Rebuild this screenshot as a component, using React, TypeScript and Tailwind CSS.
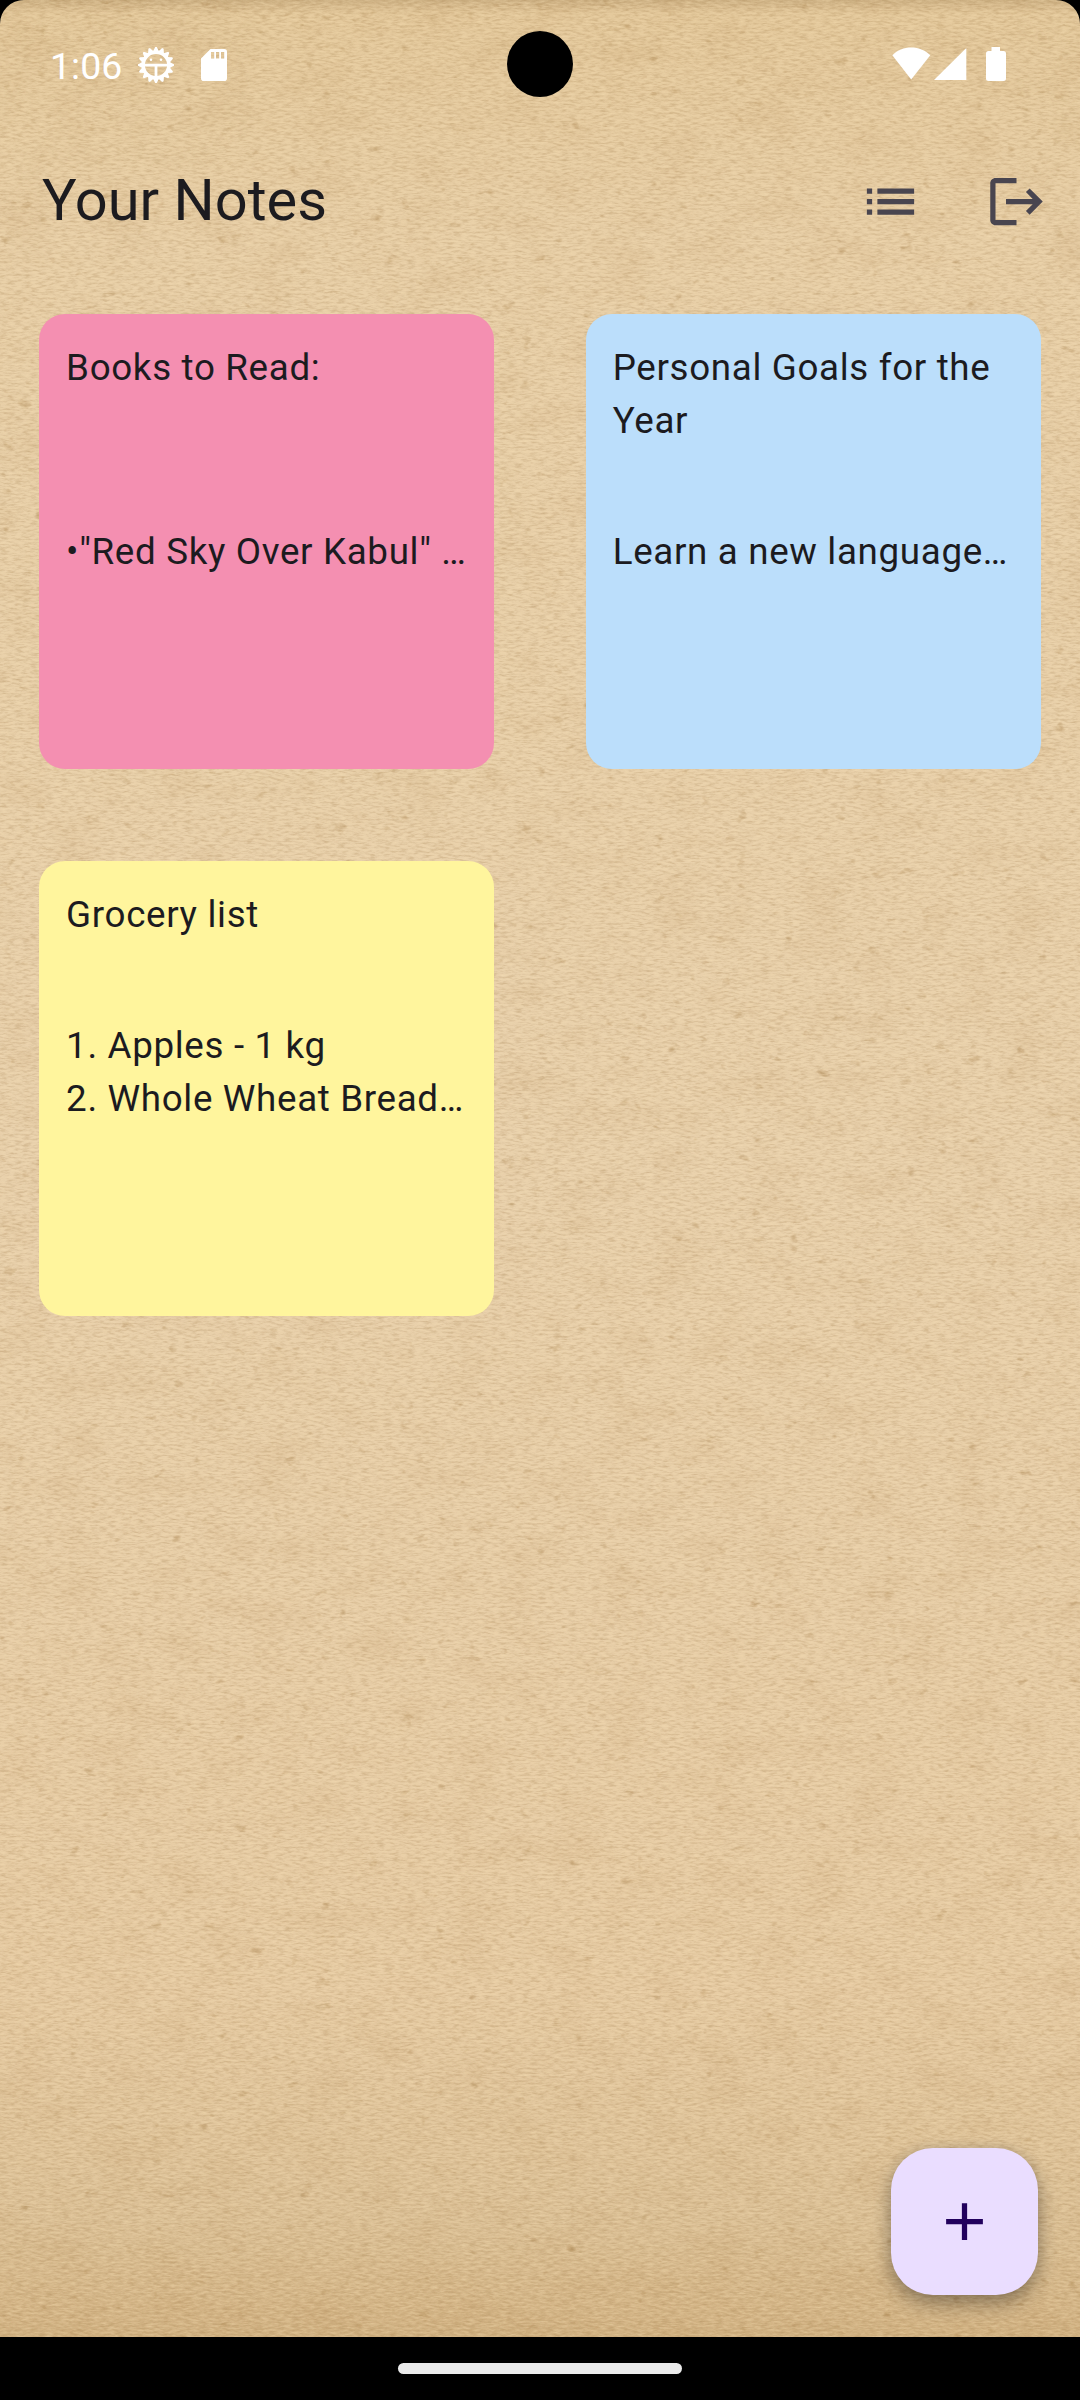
import React from "react";

const Paper = () => (
  <svg className="absolute inset-0 h-full w-full" width="1080" height="2337" preserveAspectRatio="none">
    <defs>
      <filter id="fibre" x="0" y="0" width="100%" height="100%" colorInterpolationFilters="sRGB">
        <feTurbulence type="fractalNoise" baseFrequency="0.13 0.47" numOctaves={3} seed={7} />
        <feColorMatrix type="matrix" values="0 0 0 0 0.55  0 0 0 0 0.4  0 0 0 0 0.2  1.3 0 0 0 -0.6" />
      </filter>
      <filter id="shine" x="0" y="0" width="100%" height="100%" colorInterpolationFilters="sRGB">
        <feTurbulence type="fractalNoise" baseFrequency="0.13 0.47" numOctaves={3} seed={7} />
        <feColorMatrix type="matrix" values="0 0 0 0 1  0 0 0 0 0.91  0 0 0 0 0.74  -2 0 0 0 0.95" />
      </filter>
      <filter id="mottle" x="0" y="0" width="100%" height="100%" colorInterpolationFilters="sRGB">
        <feTurbulence type="fractalNoise" baseFrequency="0.02 0.03" numOctaves={5} seed={3} />
        <feColorMatrix type="matrix" values="0 0 0 0 0.66  0 0 0 0 0.49  0 0 0 0 0.28  0.9 0 0 0 -0.42" />
      </filter>
      <filter id="flecks" x="0" y="0" width="100%" height="100%" colorInterpolationFilters="sRGB">
        <feTurbulence type="fractalNoise" baseFrequency="0.06 0.09" numOctaves={3} seed={21} />
        <feColorMatrix type="matrix" values="0 0 0 0 0.6  0 0 0 0 0.44  0 0 0 0 0.22  4 0 0 0 -2.8" />
      </filter>
      <linearGradient id="base" x1="0" y1="0" x2="0" y2="1">
        <stop offset="0" stopColor="#cfb386" />
        <stop offset="0.006" stopColor="#e3c89b" />
        <stop offset="0.1" stopColor="#e7cea6" />
        <stop offset="0.5" stopColor="#e8d0ab" />
        <stop offset="0.85" stopColor="#e6cba3" />
        <stop offset="0.95" stopColor="#dcc197" />
        <stop offset="1" stopColor="#d2b384" />
      </linearGradient>
    </defs>
    <rect width="1080" height="2337" fill="url(#base)" />
    <rect width="1080" height="2337" filter="url(#mottle)" opacity="0.26" />
    <rect width="1080" height="2337" filter="url(#flecks)" opacity="0.36" />
    <rect width="1080" height="2337" filter="url(#fibre)" opacity="0.42" />
    <rect width="1080" height="2337" filter="url(#shine)" opacity="0.4" />
  </svg>
);

const DebugIcon = () => (
  <svg className="h-9 w-9" viewBox="0 0 36 36" fill="none">
    {Array.from({ length: 16 }, (_, i) => (
      <path key={i} d="M14.8 5 L17.2 0 H18.8 L21.2 5Z" fill="white" transform={`rotate(${i * 22.5} 18 18)`} />
    ))}
    <circle cx="18" cy="18" r="12.8" stroke="white" strokeWidth="3.4" />
    <path d="M6 18.2h24M18 18v13" stroke="white" strokeWidth="2.8" />
    <circle cx="13" cy="12.8" r="1.3" fill="white" />
    <circle cx="23" cy="12.8" r="1.3" fill="white" />
  </svg>
);

const SdIcon = () => (
  <svg className="h-8 w-[26px]" viewBox="0 0 26 32">
    <path
      fill="white"
      fillRule="evenodd"
      d="M9.5 0H23.2Q26 0 26 2.8V29.2Q26 32 23.2 32H2.8Q0 32 0 29.2V9.5ZM10 3v6.4h3.2V3ZM15 3v6.4h3.2V3ZM20 3v6.4h3.2V3Z"
    />
  </svg>
);

const StatusBar = () => (
  <div className="grid h-[136px] grid-cols-[507px_66px_507px] items-start text-white">
    <div className="mt-[47px] flex h-9 items-center pl-[50px]">
      <span className="w-[88px] pt-px text-[37.5px] leading-9">1:06</span>
      <DebugIcon />
      <span className="ml-[27px]">
        <SdIcon />
      </span>
    </div>
    <div className="mt-[31px] h-[66px] w-[66px] rounded-full bg-black" />
    <div className="mt-[47px] flex h-[34px] items-center justify-end pr-[74px]">
      <svg className="h-[34px] w-[114px]" viewBox="0 0 114 34" fill="white">
        <path d="M0.3 8.2C5.5 3 12 0.5 19.2 0.5S33 3 38.3 8.2L19.2 32.5Z" />
        <path d="M42 33L74.3 1V33Z" />
        <path d="M99.5 0h8.5v4h3.5q2.5 0 2.5 2.5v25q0 2.5-2.5 2.5h-15q-2.5 0-2.5-2.5v-25q0-2.5 2.5-2.5h3Z" />
      </svg>
    </div>
  </div>
);

type Note = { title: string; body: string; color: string };

const notes: Note[] = [
  { title: "Books to Read:", body: "\n•\"Red Sky Over Kabul\" …", color: "bg-[#f48fb1]" },
  { title: "Personal Goals for the Year", body: "\nLearn a new language…", color: "bg-[#bbdefb]" },
  { title: "Grocery list", body: "1. Apples - 1 kg\n2. Whole Wheat Bread…", color: "bg-[#fff59d]" },
];

const NoteCard = ({ title, body, color }: Note) => (
  <article
    className={`flex h-[455px] flex-col gap-[25px] rounded-[26px] px-[26.7px] pt-[27px] text-[36.75px] leading-[53px] tracking-[0.66px] text-[#1c1b1f] ${color}`}
  >
    <h2 className="min-h-[106px]">{title}</h2>
    <p className="whitespace-pre">{body}</p>
  </article>
);

export default function App() {
  return (
    <div className="flex h-[2400px] w-[1080px] flex-col overflow-hidden bg-black font-[Roboto,sans-serif]">
      <main className="relative h-[2337px] overflow-hidden rounded-t-[24px]">
        <Paper />
        <div className="relative">
          <StatusBar />
          <header className="flex h-[131px] items-center pl-[42px] text-[#1c1b1f]">
            <h1 className="flex-1 pb-[2px] text-[57.75px] leading-[73px]">Your Notes</h1>
            <svg className="h-[63px] w-[63px]" viewBox="0 0 24 24" fill="#49454f">
              <path d="M3 13h2v-2H3v2zm0 4h2v-2H3v2zm0-8h2V7H3v2zm4 4h14v-2H7v2zm0 4h14v-2H7v2zM7 7v2h14V7H7z" />
            </svg>
            <svg className="mr-[31.75px] ml-[63px] h-[63px] w-[63px]" viewBox="0 0 24 24" fill="#49454f">
              <path d="M17 7l-1.41 1.41L18.17 11H8v2h10.17l-2.58 2.58L17 17l5-5zM4 5h8V3H4c-1.1 0-2 .9-2 2v14c0 1.1.9 2 2 2h8v-2H4V5z" />
            </svg>
          </header>
          <section className="grid grid-cols-2 gap-x-[92px] gap-y-[92px] px-[39.4px] pt-[47px]">
            {notes.map((n) => (
              <NoteCard key={n.title} {...n} />
            ))}
          </section>
        </div>
        <button className="absolute right-[42px] bottom-[42px] flex h-[147px] w-[147px] items-center justify-center rounded-[42px] bg-[#eaddff] shadow-[0_10px_20px_rgba(0,0,0,0.3),0_0_14px_rgba(0,0,0,0.12)]">
          <svg className="h-[63px] w-[63px]" viewBox="0 0 24 24" fill="#21005d">
            <path d="M19 13h-6v6h-2v-6H5v-2h6V5h2v6h6v2z" />
          </svg>
        </button>
      </main>
      <footer className="flex h-[63px] items-center justify-center">
        <div className="h-[11px] w-[284px] rounded-full bg-[#ebebeb]" />
      </footer>
    </div>
  );
}
